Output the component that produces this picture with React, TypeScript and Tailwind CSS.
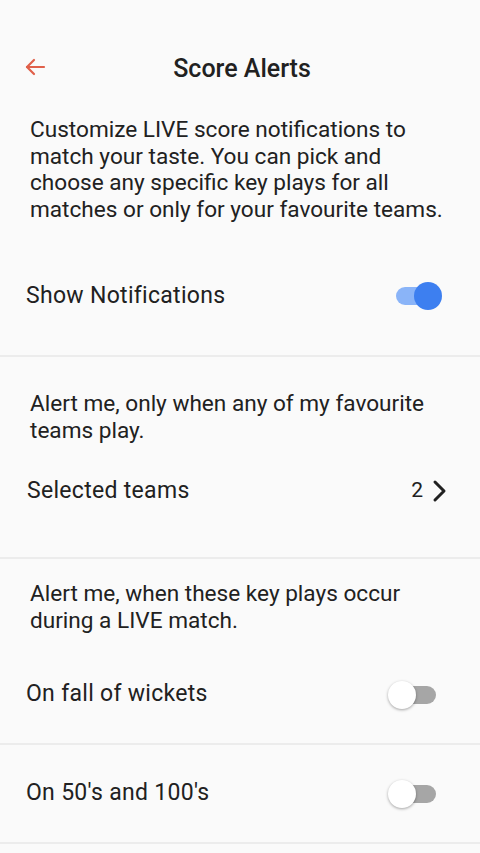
import React from "react";

function Toggle({ on }: { on: boolean }) {
  return (
    <div className="relative w-[50px] h-[30px] flex items-center">
      <div className={`absolute left-[4px] right-[2px] h-[18px] rounded-full ${on ? "bg-[#8ab4f8]" : "bg-[#a6a6a6]"}`} />
      <div
        className={`absolute w-[28px] h-[28px] rounded-full ${on ? "right-0 bg-[#3d7ff0]" : "left-0 bg-white shadow-[0_1px_3px_rgba(0,0,0,0.35)]"}`}
      />
    </div>
  );
}

export default function App() {
  return (
    <div className="w-[480px] h-[853px] overflow-hidden bg-[#fafafa] text-[#212121]" style={{ fontFamily: "Roboto, 'Noto Sans', sans-serif" }}>
      <div className="mt-[41px] h-[56px] relative flex items-center justify-center">
        <svg className="absolute left-[23px] top-[14px]" width="24" height="24" viewBox="0 0 24 24" fill="none" stroke="#e0604a" strokeWidth="2.2" strokeLinecap="round" strokeLinejoin="round">
          <path d="M21 12H4" />
          <path d="M11 5l-7 7 7 7" />
        </svg>
        <div className="text-[25px] font-medium ml-[4px]">Score Alerts</div>
      </div>
      <p className="mt-[20px] pl-[30px] pr-[30px] text-[22.6px] leading-[26.7px]">
        Customize LIVE score notifications to match your taste. You can pick and choose any specific key plays for all matches or only for your favourite teams.
      </p>
      <div className="mt-[44px] h-[56px] pl-[26px] pr-[38px] flex items-center justify-between">
        <span className="text-[23px] tracking-[0.3px]">Show Notifications</span>
        <Toggle on />
      </div>
      <div className="mt-[31px] h-[2px] bg-[#ececec]" />
      <p className="mt-[33px] px-[30px] text-[22.6px] leading-[27px]">
        Alert me, only when any of my favourite teams play.
      </p>
      <div className="mt-[19px] h-[56px] pl-[27px] pr-[32px] flex items-center justify-between">
        <span className="text-[23px] tracking-[0.3px]">Selected teams</span>
        <div className="flex items-center gap-[9px]">
          <span className="text-[21px]">2</span>
          <svg width="16" height="24" viewBox="0 0 16 24" fill="none" stroke="#212121" strokeWidth="3" strokeLinecap="round" strokeLinejoin="round">
            <path d="M3 3l9 9-9 9" />
          </svg>
        </div>
      </div>
      <div className="mt-[38px] h-[2px] bg-[#ececec]" />
      <p className="mt-[22px] px-[30px] text-[22.6px] leading-[26.7px]">
        Alert me, when these key plays occur during a LIVE match.
      </p>
      <div className="mt-[12px] h-[97px] pl-[26px] pr-[42px] flex items-center justify-between">
        <span className="text-[23px] tracking-[0.3px]">On fall of wickets</span>
        <Toggle on={false} />
      </div>
      <div className="h-[2px] bg-[#ececec]" />
      <div className="h-[97px] pl-[26px] pr-[42px] flex items-center justify-between">
        <span className="text-[23px] tracking-[0.3px]">On 50's and 100's</span>
        <Toggle on={false} />
      </div>
      <div className="h-[2px] bg-[#ececec]" />
    </div>
  );
}
